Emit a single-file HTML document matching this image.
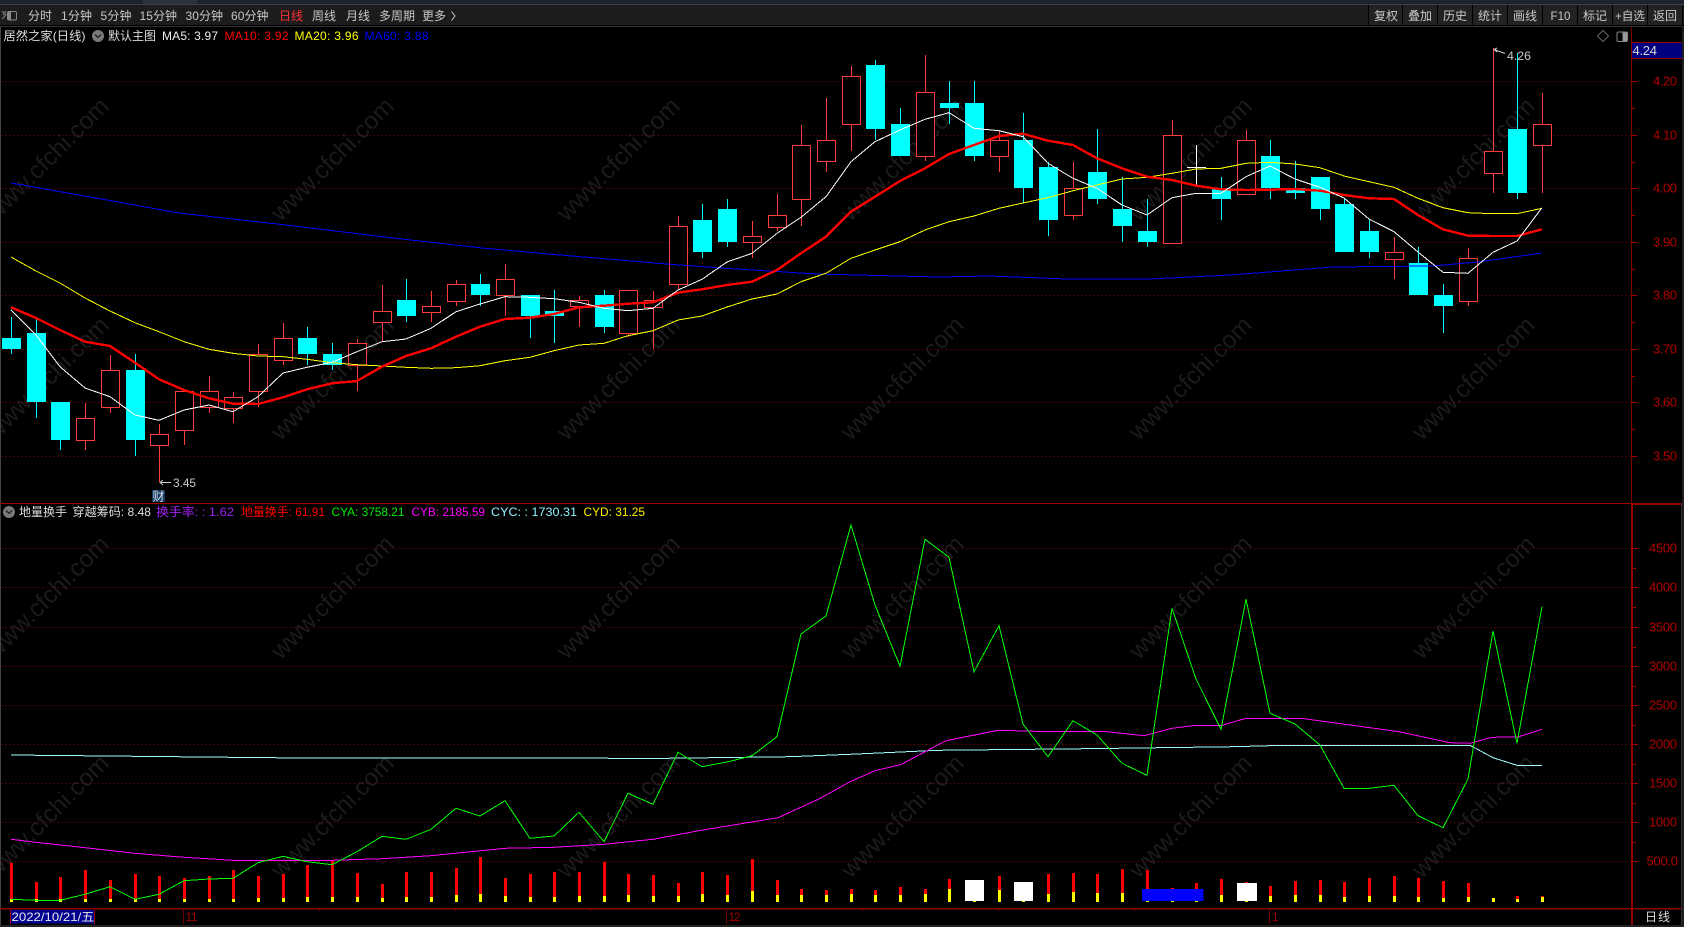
<!DOCTYPE html>
<html lang="zh"><head><meta charset="utf-8"><title>居然之家</title>
<style>
html,body{margin:0;padding:0;background:#000;width:1684px;height:927px;overflow:hidden}
svg{display:block;position:absolute;left:0;top:0}
text{font-family:"Liberation Sans","Noto Sans CJK SC",sans-serif;font-size:12px}
.t{fill:#c8c8c8}
.ax{fill:#b00000;font-size:13px}
.wm{font-size:24.5px;fill:#1b1b1b;text-anchor:middle}
polyline{shape-rendering:crispEdges}
</style></head><body>
<svg width="1684" height="927" viewBox="0 0 1684 927" xmlns="http://www.w3.org/2000/svg">
<rect width="1684" height="927" fill="#000"/>
<!-- watermark -->
<g class="wm">
<text class="wm" transform="translate(53,165) rotate(-45)">www.cfchi.com</text><text class="wm" transform="translate(338,165) rotate(-45)">www.cfchi.com</text><text class="wm" transform="translate(624,165) rotate(-45)">www.cfchi.com</text><text class="wm" transform="translate(908,165) rotate(-45)">www.cfchi.com</text><text class="wm" transform="translate(1196,165) rotate(-45)">www.cfchi.com</text><text class="wm" transform="translate(1479,165) rotate(-45)">www.cfchi.com</text>
<text class="wm" transform="translate(53,384) rotate(-45)">www.cfchi.com</text><text class="wm" transform="translate(338,384) rotate(-45)">www.cfchi.com</text><text class="wm" transform="translate(624,384) rotate(-45)">www.cfchi.com</text><text class="wm" transform="translate(908,384) rotate(-45)">www.cfchi.com</text><text class="wm" transform="translate(1196,384) rotate(-45)">www.cfchi.com</text><text class="wm" transform="translate(1479,384) rotate(-45)">www.cfchi.com</text>
<text class="wm" transform="translate(53,603) rotate(-45)">www.cfchi.com</text><text class="wm" transform="translate(338,603) rotate(-45)">www.cfchi.com</text><text class="wm" transform="translate(624,603) rotate(-45)">www.cfchi.com</text><text class="wm" transform="translate(908,603) rotate(-45)">www.cfchi.com</text><text class="wm" transform="translate(1196,603) rotate(-45)">www.cfchi.com</text><text class="wm" transform="translate(1479,603) rotate(-45)">www.cfchi.com</text>
<text class="wm" transform="translate(53,822) rotate(-45)">www.cfchi.com</text><text class="wm" transform="translate(338,822) rotate(-45)">www.cfchi.com</text><text class="wm" transform="translate(624,822) rotate(-45)">www.cfchi.com</text><text class="wm" transform="translate(908,822) rotate(-45)">www.cfchi.com</text><text class="wm" transform="translate(1196,822) rotate(-45)">www.cfchi.com</text><text class="wm" transform="translate(1479,822) rotate(-45)">www.cfchi.com</text>
</g>
<!-- grid -->
<path d="M2 81.5H1632M2 135.5H1632M2 188.5H1632M2 242.5H1632M2 295.5H1632M2 349.5H1632M2 402.5H1632M2 456.5H1632M2 548.5H1632M2 587.5H1632M2 627.5H1632M2 666.5H1632M2 705.5H1632M2 744.5H1632M2 783.5H1632M2 822.5H1632M2 861.5H1632" stroke="#8c0000" stroke-width="1" stroke-dasharray="1 3" fill="none" shape-rendering="crispEdges"/>
<!-- cyan wicks -->
<path shape-rendering="crispEdges" stroke="#00ffff" fill="none" d="M11.5 317V354M36.5 318V418M60.5 402V450M135.5 354V456M307.5 327V365M332.5 343V370M406.5 279V322M480.5 274V306M530.5 295V338M554.5 290V343M604.5 290V333M702.5 204V258M727.5 199V247M875.5 60V140M900.5 108V156M949.5 81V124M974.5 81V161M1023.5 113V203M1048.5 162V236M1097.5 129V204M1122.5 177V242M1147.5 199V247M1221.5 177V220M1270.5 140V199M1295.5 161V199M1320.5 177V220M1344.5 199V252M1369.5 219V258M1418.5 247V295M1443.5 284V333M1517.5 53V199"/>
<!-- cyan bodies -->
<path shape-rendering="crispEdges" fill="#00ffff" d="M2 338h19v11h-19zM27 333h19v69h-19zM51 402h19v38h-19zM126 370h19v70h-19zM298 338h19v16h-19zM323 354h19v11h-19zM397 300h19v16h-19zM471 284h19v11h-19zM521 295h19v21h-19zM545 311h19v5h-19zM595 295h19v32h-19zM693 220h19v32h-19zM718 209h19v33h-19zM866 65h19v64h-19zM891 124h19v32h-19zM940 103h19v5h-19zM965 103h19v53h-19zM1014 140h19v48h-19zM1039 167h19v53h-19zM1088 172h19v27h-19zM1113 209h19v17h-19zM1138 231h19v11h-19zM1212 188h19v11h-19zM1261 156h19v32h-19zM1286 188h19v5h-19zM1311 177h19v32h-19zM1335 204h19v48h-19zM1360 231h19v21h-19zM1409 263h19v32h-19zM1434 295h19v11h-19zM1508 129h19v64h-19z"/>
<!-- red wicks -->
<path shape-rendering="crispEdges" stroke="#ff3c3c" fill="none" d="M85.5 403V450M110.5 355V413M159.5 424V482M184.5 391V445M209.5 376V413M233.5 392V423M258.5 344V407M283.5 323V365M357.5 339V391M382.5 285V342M431.5 291V322M456.5 280V306M505.5 264V316M579.5 296V327M628.5 290V337M653.5 291V349M678.5 216V289M752.5 221V258M777.5 194V231M801.5 125V226M826.5 98V172M851.5 66V151M925.5 55V161M999.5 131V172M1073.5 162V220M1172.5 120V243M1246.5 130V194M1394.5 237V279M1468.5 248V306M1493.5 48V193M1542.5 93V193"/>
<!-- red bodies -->
<path shape-rendering="crispEdges" stroke="#ff3c3c" fill="#000" d="M76.5 418.5h18v22h-18zM101.5 370.5h18v37h-18zM150.5 434.5h18v11h-18zM175.5 391.5h18v39h-18zM200.5 391.5h18v16h-18zM224.5 397.5h18v11h-18zM249.5 354.5h18v37h-18zM274.5 338.5h18v22h-18zM348.5 343.5h18v22h-18zM373.5 311.5h18v11h-18zM422.5 306.5h18v6h-18zM447.5 284.5h18v17h-18zM496.5 279.5h18v16h-18zM570.5 300.5h18v6h-18zM619.5 290.5h18v43h-18zM644.5 300.5h18v7h-18zM669.5 226.5h18v58h-18zM743.5 236.5h18v6h-18zM768.5 215.5h18v12h-18zM792.5 145.5h18v54h-18zM817.5 140.5h18v21h-18zM842.5 76.5h18v48h-18zM916.5 92.5h18v64h-18zM990.5 140.5h18v16h-18zM1064.5 188.5h18v27h-18zM1163.5 135.5h18v108h-18zM1237.5 140.5h18v54h-18zM1385.5 252.5h18v7h-18zM1459.5 258.5h18v43h-18zM1484.5 151.5h18v22h-18zM1533.5 124.5h18v21h-18z"/>
<!-- doji -->
<path shape-rendering="crispEdges" stroke="#fff" fill="none" d="M1196.5 145V185M1187 167.5H1206"/>
<!-- MA60 -->
<polyline fill="none" stroke="#0000ff" stroke-width="1" points="11,183 107,200 179,213 286,225 393,238 482,248 560,255 667,264 721,268 817,274 939,277 989,276 1067,279 1149,279 1230,275 1333,267 1432,266 1478,262 1542,253"/>
<!-- MA20 -->
<polyline fill="none" stroke="#ffff00" stroke-width="1" points="11,257 36,271 60,283 85,298 110,311 135,322.7 159,331.7 184,341.7 209,349.3 233,353.3 258,356 283,356.7 307,359.3 332,362.7 357,364.7 382,366 406,367.3 431,368.3 456,367.7 480,365.7 505,360.7 530,357.3 554,350.7 579,345 604,343.3 628,335.7 653,330.7 678,320 702,316 727,307 752,299 777,294 801,281.7 826,273.3 851,258.3 875,250 900,241.7 925,230 949,221.7 974,216 999,208.3 1023,203 1048,197.7 1073,190.7 1097,185 1122,179 1147,177.3 1172,173.3 1196,169 1221,168.3 1246,163.3 1270,162.3 1295,164 1320,167.7 1344,176 1369,181.7 1394,187.3 1418,198.3 1443,207.7 1468,212.7 1493,213.7 1517,213.7 1542,208.3"/>
<!-- MA10 -->
<polyline fill="none" stroke="#ff0000" stroke-width="2.4" points="11,307.3 36,318 60,330 85,341.7 110,346 135,362.7 159,379.3 184,390 209,398.3 233,403.7 258,404 283,397.3 307,389.3 332,383.3 357,381 382,366.7 406,356 431,348.3 456,336.7 480,326.7 505,319 530,317.7 554,314 579,307.3 604,305.7 628,303.7 653,302.3 678,292.7 702,289.3 727,285 752,281.7 777,270 801,253.3 826,236.7 851,211.7 875,196.7 900,181 925,168.3 949,154 974,145 999,136 1023,133.7 1048,140.7 1073,145 1097,158.3 1122,168.3 1147,176.7 1172,180 1196,185.7 1221,189.3 1246,190 1270,189.7 1295,189 1320,190.7 1344,195 1369,198.3 1394,199 1418,215 1443,229.3 1468,235.7 1493,236 1517,236 1542,229.3"/>
<!-- MA5 -->
<polyline fill="none" stroke="#ffffff" stroke-width="1" points="11,310 36,335 60,366.7 85,388 110,396.7 135,415 159,420.3 184,410 209,405 233,411.7 258,396.7 283,373 307,367.3 332,362.3 357,351.7 382,341.7 406,339 431,328.3 456,311.7 480,304 505,296.7 530,297.3 554,298.7 579,302.3 604,308.3 628,310.7 653,308.3 678,290 702,279.3 727,262 752,253.3 777,233.3 801,217.3 826,196.7 851,161.7 875,141.7 900,130 925,119.3 949,112.7 974,128.3 999,130.7 1023,136.7 1048,163.3 1073,178.3 1097,188.3 1122,205 1147,215 1172,197.7 1196,193.3 1221,193.3 1246,176.7 1270,166 1295,179 1320,187.3 1344,198 1369,219 1394,231.7 1418,252 1443,272.3 1468,273.3 1493,252.3 1517,241 1542,207.7"/>
<!-- volume red -->
<path stroke="#ff0000" stroke-width="3" fill="none" shape-rendering="crispEdges" d="M11.5 863V902M36.5 882V902M60.5 877V902M85.5 870V902M110.5 880V902M135.5 874V902M159.5 876V902M184.5 878V902M209.5 876V902M233.5 870V902M258.5 876V902M283.5 874V902M307.5 865V902M332.5 860V902M357.5 873V902M382.5 884V902M406.5 872V902M431.5 872V902M456.5 868V902M480.5 857V902M505.5 878V902M530.5 874V902M554.5 872V902M579.5 872V902M604.5 862V902M628.5 874V902M653.5 875V902M678.5 883V902M702.5 872V902M727.5 875V902M752.5 859V902M777.5 880V902M801.5 889V902M826.5 890V902M851.5 889V902M875.5 890V902M900.5 887V902M925.5 889V902M949.5 879V902M974.5 880V902M999.5 876V902M1023.5 882V902M1048.5 874V902M1073.5 873V902M1097.5 874V902M1122.5 869V902M1147.5 870V902M1172.5 888V902M1196.5 883V902M1221.5 879V902M1246.5 882V902M1270.5 886V902M1295.5 881V902M1320.5 880V902M1344.5 882V902M1369.5 878V902M1394.5 876V902M1418.5 878V902M1443.5 881V902M1468.5 883V902M1493.5 898V902M1517.5 896V902M1542.5 896V902"/>
<!-- volume yellow -->
<path stroke="#ffff00" stroke-width="3" fill="none" shape-rendering="crispEdges" d="M11.5 899V902M36.5 899V902M60.5 899V902M85.5 899V902M110.5 899V902M135.5 899V902M159.5 899V902M184.5 899V902M209.5 899V902M233.5 899V902M258.5 898V902M283.5 898V902M307.5 897V902M332.5 897V902M357.5 897V902M382.5 898V902M406.5 897V902M431.5 897V902M456.5 895V902M480.5 894V902M505.5 896V902M530.5 897V902M554.5 897V902M579.5 896V902M604.5 896V902M628.5 895V902M653.5 896V902M678.5 896V902M702.5 894V902M727.5 895V902M752.5 891V902M777.5 895V902M801.5 895V902M826.5 895V902M851.5 894V902M875.5 895V902M900.5 895V902M925.5 894V902M949.5 889V902M974.5 890V902M999.5 890V902M1023.5 892V902M1048.5 894V902M1073.5 892V902M1097.5 893V902M1122.5 893V902M1147.5 893V902M1172.5 893V902M1196.5 893V902M1221.5 895V902M1246.5 895V902M1270.5 896V902M1295.5 895V902M1320.5 895V902M1344.5 897V902M1369.5 896V902M1394.5 896V902M1418.5 897V902M1443.5 898V902M1468.5 897V902M1493.5 898V902M1517.5 899V902M1542.5 897V902"/>
<rect x="965" y="880" width="19" height="21" fill="#fff"/>
<rect x="1014" y="882" width="19" height="19" fill="#fff"/>
<rect x="1237" y="883" width="20" height="18" fill="#fff"/>
<rect x="1142" y="889" width="61.5" height="12" fill="#0000ff"/>
<!-- CYC -->
<polyline fill="none" stroke="#a0ffff" stroke-width="1" points="11,755 300,758 666,758.3 790,756.7 850,754.3 938,750.3 1086,748.7 1234,746.7 1284,745.3 1470,745.3 1493,757.7 1517,765.3 1542,765.3"/>
<!-- CYB -->
<polyline fill="none" stroke="#ff00ff" stroke-width="1" points="11,839.3 36,842.3 85,847.7 135,853.3 184,857.3 233,860.3 332,860.3 382,858.7 431,855.7 505,848.3 554,847.3 604,844.3 653,839.3 700,830.5 778,817.7 819,799 850,781.7 875,770.7 901,764.5 946,740.7 998,730.3 1036,731.3 1103,731.3 1144,735.7 1172,728.3 1196,725.3 1222,725.3 1246,718.3 1301,718.3 1348,724.7 1399,731.7 1450,742.7 1470,743.3 1492,737.3 1518,737 1542,729.3"/>
<!-- CYA -->
<polyline fill="none" stroke="#00ff00" stroke-width="1" points="11,899.3 36,900.3 60,900.3 85,894.3 110,886.7 135,899.3 159,894.3 184,880.7 209,879 233,878.3 258,862.7 283,856.3 307,861.7 332,864.7 357,851.7 382,836.3 406,839.3 431,829.3 456,808.3 480,816 505,800.7 530,838.3 554,836 579,812.3 604,841.7 628,793.3 653,804.3 678,752.3 702,766.7 727,762 752,755.7 777,736.7 801,634 826,616 851,525 875,605 900,666.3 925,539.3 949,557.3 974,671.7 999,625.7 1023,724 1048,756.7 1073,720.7 1097,735 1122,763.3 1147,775.3 1172,608.3 1196,679 1221,729.3 1246,599.3 1270,713.3 1295,724 1320,745 1344,788.3 1369,788.3 1394,785.3 1418,815.7 1443,827.7 1468,779 1493,631 1517,743.3 1542,606.7"/>
<!-- annotations -->
<path d="M171 482.5H160M163 480L160 482.5L163 485" stroke="#ccc" fill="none"/>
<text class="t" x="173" y="487" textLength="23" lengthAdjust="spacingAndGlyphs">3.45</text>
<rect x="152" y="490" width="13" height="12" fill="#123a5e"/>
<text x="152.5" y="500.5" fill="#dde" style="font-size:12px">财</text>
<path d="M1505 53.5L1494 49.5M1497 48L1494 49.5L1497 52" stroke="#ccc" fill="none"/>
<text class="t" x="1507" y="60" textLength="24" lengthAdjust="spacingAndGlyphs">4.26</text>
<!-- frame / toolbar -->
<rect x="0" y="0" width="1684" height="4" fill="#1d2430"/>
<rect x="143" y="0" width="54" height="4" fill="#2c323b"/>
<rect x="0" y="4" width="1684" height="1" fill="#3c4248"/>
<rect x="0" y="5" width="1684" height="20" fill="#1c1c1e"/>
<rect x="0" y="25" width="1684" height="1" fill="#000"/>
<rect x="0" y="26" width="1684" height="1" fill="#333"/>
<rect x="0" y="27" width="1" height="898" fill="#444"/>
<!-- left toolbar icon -->
<path d="M2 11l4 4-4 4M6 11l-3 4" stroke="#777" fill="none" stroke-width="1.2"/>
<rect x="7.5" y="11.5" width="9" height="8.5" rx="1.5" fill="none" stroke="#888"/>
<rect x="8" y="12" width="3" height="7.5" fill="#888"/>
<g class="t">
<text class="t" x="28" y="20" textLength="24">分时</text>
<text class="t" x="61" y="20" textLength="31">1分钟</text>
<text class="t" x="100.5" y="20" textLength="31">5分钟</text>
<text class="t" x="139.5" y="20" textLength="37.5">15分钟</text>
<text class="t" x="185.5" y="20" textLength="37.5">30分钟</text>
<text class="t" x="231" y="20" textLength="37.5">60分钟</text>
<text x="279" y="20" fill="#ff3030">日线</text>
<text class="t" x="312" y="20">周线</text>
<text class="t" x="346" y="20">月线</text>
<text class="t" x="379" y="20">多周期</text>
<text class="t" x="422" y="20">更多</text>
<path d="M451.5 11.5l3.5 4.5-3.5 4.5" stroke="#c8c8c8" fill="none"/>
</g>
<!-- right buttons -->
<rect x="1369" y="5" width="313" height="20" fill="#222224"/>
<path d="M1368.5 5V25M1402.5 5V25M1437.5 5V25M1472.5 5V25M1507.5 5V25M1542.5 5V25M1577.5 5V25M1612.5 5V25M1647.5 5V25M1682.5 5V25" stroke="#000" shape-rendering="crispEdges"/>
<text class="t" x="1374" y="20">复权</text>
<text class="t" x="1408" y="20">叠加</text>
<text class="t" x="1443" y="20">历史</text>
<text class="t" x="1478" y="20">统计</text>
<text class="t" x="1513" y="20">画线</text>
<text class="t" x="1550.5" y="20" textLength="20" lengthAdjust="spacingAndGlyphs">F10</text>
<text class="t" x="1583" y="20">标记</text>
<text class="t" x="1615" y="20" textLength="30" lengthAdjust="spacingAndGlyphs">+自选</text>
<text class="t" x="1653" y="20">返回</text>
<!-- title row -->
<text x="3.5" y="40" fill="#ddd" textLength="82" lengthAdjust="spacingAndGlyphs">居然之家(日线)</text>
<circle cx="98" cy="36" r="6" fill="#7a7a7a"/><path d="M95 34.5l3 3 3-3" stroke="#222" stroke-width="1.3" fill="none"/>
<text x="108" y="40" fill="#ddd">默认主图</text>
<text x="162" y="40" fill="#eee" textLength="56">MA5: 3.97</text>
<text x="224.5" y="40" fill="#ff0000" textLength="64">MA10: 3.92</text>
<text x="294.5" y="40" fill="#ffff00" textLength="64">MA20: 3.96</text>
<text x="364.5" y="40" fill="#0000ff" textLength="64">MA60: 3.88</text>
<!-- top right icons -->
<path d="M1603 30.5l5.5 5.5-5.5 5.5-5.5-5.5z" stroke="#666" fill="none"/>
<rect x="1617" y="32" width="10.5" height="9.5" rx="1.5" fill="none" stroke="#888"/>
<rect x="1622.5" y="32.5" width="4.5" height="8.5" fill="#999"/>
<!-- axes -->
<path d="M1631.5 27V503" stroke="#800000" fill="none" shape-rendering="crispEdges"/>
<rect x="1631" y="503" width="2" height="422" fill="#900000"/>
<rect x="0" y="503" width="1631" height="1" fill="#a00000"/>
<rect x="1631" y="503" width="50" height="2" fill="#900000"/>
<rect x="1681" y="503" width="1" height="422" fill="#2a2a2a"/>
<rect x="0" y="908" width="1681" height="1.5" fill="#900000"/>
<rect x="1682" y="26" width="2" height="901" fill="#1e1e1e"/>
<rect x="0" y="925" width="1684" height="2" fill="#222"/>
<path shape-rendering="crispEdges" stroke="#a00000" d="M1632 81.5h5M1632 135.5h5M1632 188.5h5M1632 242.5h5M1632 295.5h5M1632 349.5h5M1632 402.5h5M1632 456.5h5M1632 108.5h3M1632 162.5h3M1632 215.5h3M1632 269.5h3M1632 322.5h3M1632 376.5h3M1632 429.5h3M1633 548.5h5M1633 587.5h5M1633 627.5h5M1633 666.5h5M1633 705.5h5M1633 744.5h5M1633 783.5h5M1633 822.5h5M1633 861.5h5M1633 568.5h3M1633 607.5h3M1633 647.5h3M1633 686.5h3M1633 725.5h3M1633 764.5h3M1633 803.5h3M1633 842.5h3"/>
<!-- axis labels -->
<g>
<text class="ax" x="1653" y="85.5" textLength="24">4.20</text>
<text class="ax" x="1653" y="139.5" textLength="24">4.10</text>
<text class="ax" x="1653" y="192.5" textLength="24">4.00</text>
<text class="ax" x="1653" y="246.5" textLength="24">3.90</text>
<text class="ax" x="1653" y="299.5" textLength="24">3.80</text>
<text class="ax" x="1653" y="353.5" textLength="24">3.70</text>
<text class="ax" x="1653" y="406.5" textLength="24">3.60</text>
<text class="ax" x="1653" y="460.5" textLength="24">3.50</text>
<text class="ax" x="1649" y="552.5" textLength="28">4500</text>
<text class="ax" x="1649" y="591.5" textLength="28">4000</text>
<text class="ax" x="1649" y="631.5" textLength="28">3500</text>
<text class="ax" x="1649" y="670.5" textLength="28">3000</text>
<text class="ax" x="1649" y="709.5" textLength="28">2500</text>
<text class="ax" x="1649" y="748.5" textLength="28">2000</text>
<text class="ax" x="1649" y="787.5" textLength="28">1500</text>
<text class="ax" x="1649" y="826.5" textLength="28">1000</text>
<text class="ax" x="1646.5" y="865.5" textLength="31.5">500.0</text>
</g>
<!-- price tag -->
<rect x="1632" y="42" width="50" height="17" fill="#000080"/>
<path d="M1632 42.5H1682M1632 58.5H1682" stroke="#900000" shape-rendering="crispEdges"/>
<text x="1632.5" y="55" fill="#d8d8d8" style="font-size:13px" textLength="24.5">4.24</text>
<!-- indicator row -->
<circle cx="9" cy="512" r="6" fill="#7a7a7a"/><path d="M6 510.5l3 3 3-3" stroke="#222" stroke-width="1.3" fill="none"/>
<text x="19" y="516" fill="#ddd">地量换手</text>
<text x="72.5" y="516" fill="#ddd" textLength="78.5" lengthAdjust="spacingAndGlyphs">穿越筹码: 8.48</text>
<text x="156" y="516" fill="#a020f0" textLength="78" lengthAdjust="spacingAndGlyphs">换手率: : 1.62</text>
<text x="241" y="516" fill="#ff0000" textLength="84" lengthAdjust="spacingAndGlyphs">地量换手: 61.91</text>
<text x="331.5" y="516" fill="#00ee00" textLength="73" lengthAdjust="spacingAndGlyphs">CYA: 3758.21</text>
<text x="411.5" y="516" fill="#ff00ff" textLength="73.5" lengthAdjust="spacingAndGlyphs">CYB: 2185.59</text>
<text x="491" y="516" fill="#90f0ff" textLength="86" lengthAdjust="spacingAndGlyphs">CYC: : 1730.31</text>
<text x="583.5" y="516" fill="#ffee00" textLength="61.5" lengthAdjust="spacingAndGlyphs">CYD: 31.25</text>
<!-- date row -->
<rect x="10" y="910" width="85" height="13.5" fill="#000090"/>
<path d="M10.5 910V924M94.5 910V924" stroke="#a00000" shape-rendering="crispEdges"/>
<text x="11.5" y="921" fill="#e8e8e8" textLength="83" lengthAdjust="spacingAndGlyphs">2022/10/21/五</text>
<path d="M183.5 909V924M726.5 909V924M1269.5 909V924M319.5 909v2M455.5 909v2M590.5 909v2M862.5 909v2M998.5 909v2M1134.5 909v2" stroke="#700000" shape-rendering="crispEdges"/>
<text x="185.5" y="921" fill="#a00000" textLength="12">11</text>
<text x="728.5" y="921" fill="#a00000" textLength="12">12</text>
<text x="1272" y="921" fill="#a00000">1</text>
<text x="1645" y="921" fill="#ddd" textLength="25">日线</text>
</svg>
</body></html>
